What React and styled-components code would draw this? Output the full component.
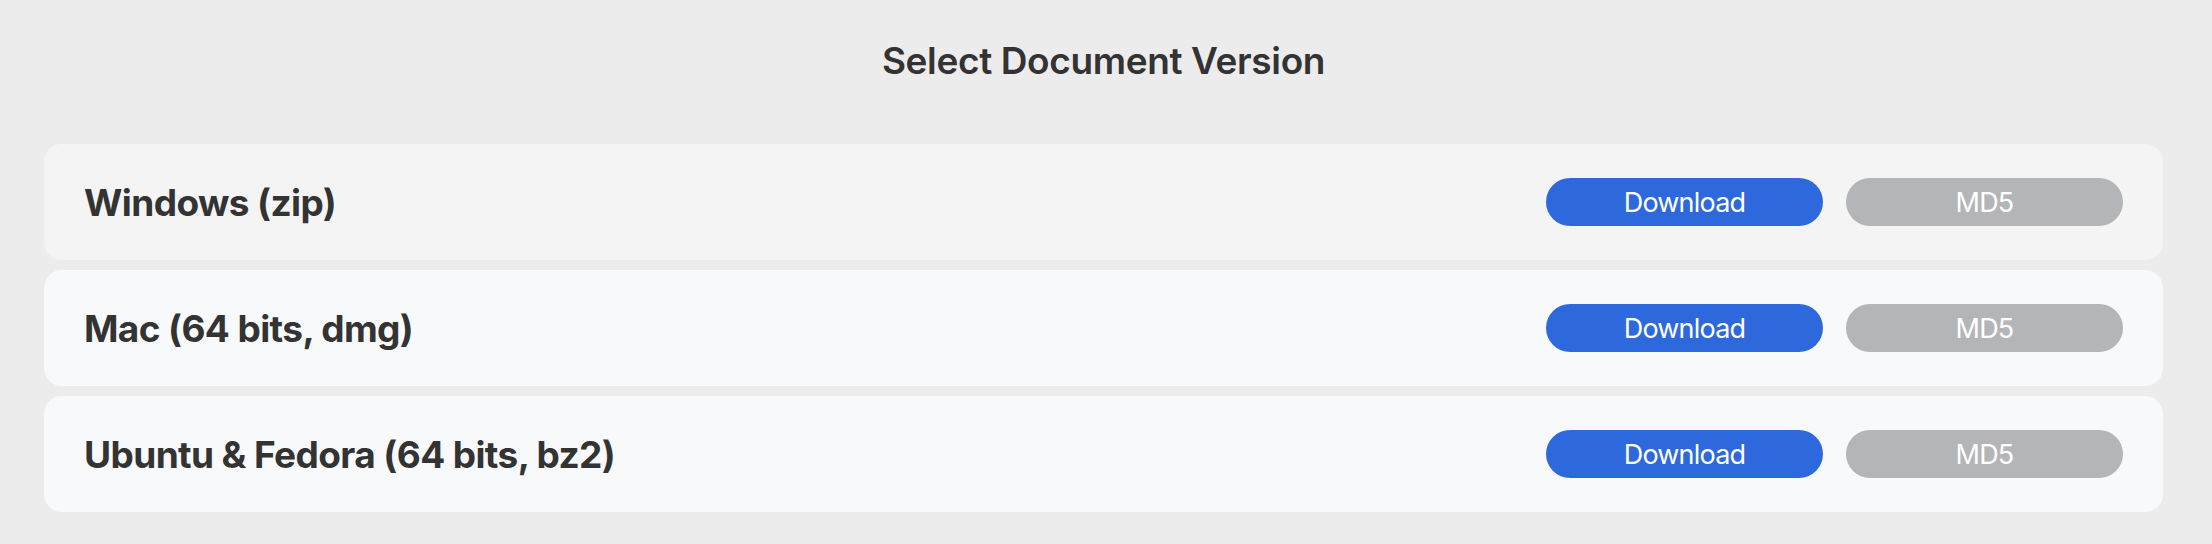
import React from 'react'
import styled, { createGlobalStyle } from 'styled-components'

const GlobalStyle = createGlobalStyle`
  html, body {
    margin: 0;
    padding: 0;
    background: #ececec;
  }
  body {
    font-family: Inter, "Noto Sans", "Liberation Sans", sans-serif;
    color: #333333;
  }
`

const versions = [
  { name: 'Windows (zip)', tone: 'grey' },
  { name: 'Mac (64 bits, dmg)', tone: 'cool' },
  { name: 'Ubuntu & Fedora (64 bits, bz2)', tone: 'cool' },
]

const Page = styled.main`
  width: 2119px;
  margin-left: 44px;
  padding: 38px 0 32px;
  display: flex;
  flex-direction: column;
`

const Title = styled.h1`
  margin: 0 0 61px;
  font-size: 37px;
  line-height: 45px;
  font-weight: 600;
  letter-spacing: -0.37px;
  text-align: center;
  color: #333333;
`

const List = styled.div`
  display: flex;
  flex-direction: column;
  gap: 10px;
`

const Row = styled.div`
  height: 116px;
  box-sizing: border-box;
  padding: 0 40px;
  display: flex;
  align-items: center;
  justify-content: space-between;
  border-radius: 18px;
  background: ${p => (p.$tone === 'grey' ? '#f4f4f4' : '#f8f9fa')};
`

const Label = styled.span`
  font-size: 37px;
  font-weight: 700;
  letter-spacing: -0.6px;
  color: #333333;
`

const Actions = styled.div`
  display: flex;
  gap: 23px;
`

const Button = styled.button`
  width: 277px;
  height: 48px;
  border: none;
  border-radius: 24px;
  padding: 0;
  font-family: inherit;
  font-size: 27px;
  font-weight: 400;
  letter-spacing: -0.8px;
  color: #ffffff;
  cursor: pointer;
  background: ${p => (p.$primary ? '#2d69dd' : '#b4b5b9')};
`

export default function App() {
  return (
    <>
      <GlobalStyle />
      <Page>
        <Title>Select Document Version</Title>
        <List>
          {versions.map(v => (
            <Row key={v.name} $tone={v.tone}>
              <Label>{v.name}</Label>
              <Actions>
                <Button $primary>Download</Button>
                <Button>MD5</Button>
              </Actions>
            </Row>
          ))}
        </List>
      </Page>
    </>
  )
}
